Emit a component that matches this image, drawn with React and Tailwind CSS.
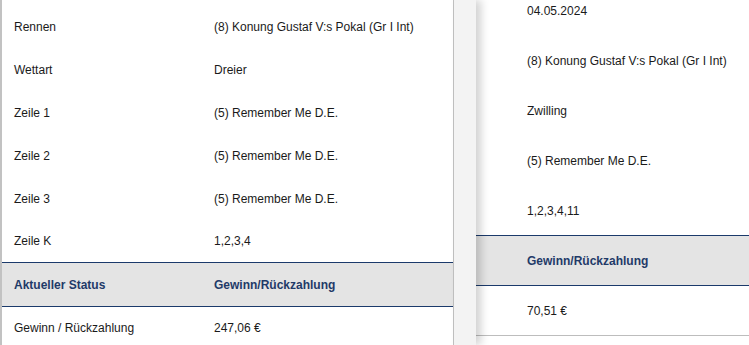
import React from 'react';

const LEFT_ROWS = [
  ['Rennen', '(8) Konung Gustaf V:s Pokal (Gr I Int)'],
  ['Wettart', 'Dreier'],
  ['Zeile 1', '(5) Remember Me D.E.'],
  ['Zeile 2', '(5) Remember Me D.E.'],
  ['Zeile 3', '(5) Remember Me D.E.'],
  ['Zeile K', '1,2,3,4'],
];

const RIGHT_ROWS = [
  '04.05.2024',
  '(8) Konung Gustaf V:s Pokal (Gr I Int)',
  'Zwilling',
  '(5) Remember Me D.E.',
  '1,2,3,4,11',
];

export default function App() {
  return (
    <div className="flex h-[345px] w-[749px] overflow-hidden bg-[#f3f3f3] font-['Liberation_Sans',Arial,sans-serif] text-[12px] text-[#1a1a1a]">
      {/* left slip */}
      <div className="flex w-[454px] flex-none flex-col border-l-2 border-r border-l-[#c2c2c2] border-r-[#c2c2c2] bg-white pt-[5px]">
        {LEFT_ROWS.map(([label, value], i) => (
          <div key={i} className={`flex shrink-0 items-center ${i === 5 ? 'h-[42px]' : 'h-[43px]'}`}>
            <span className="w-[212px] pl-3">{label}</span>
            <span>{value}</span>
          </div>
        ))}
        <div className="flex h-[45px] shrink-0 items-center border-y border-[#1b3a6b] bg-[#e4e4e4] font-bold text-[#1f3a68]">
          <span className="w-[212px] pl-3">Aktueller Status</span>
          <span>Gewinn/Rückzahlung</span>
        </div>
        <div className="flex h-[41px] shrink-0 items-center">
          <span className="w-[212px] pl-3">Gewinn / Rückzahlung</span>
          <span>247,06 €</span>
        </div>
      </div>

      {/* gap casting shadow on the right slip */}
      <div className="relative z-10 w-[22px] flex-none bg-[#f3f3f3] shadow-[5px_0_8px_rgba(0,0,0,0.18)]" />

      {/* right slip */}
      <div className="flex flex-1 flex-col bg-white">
        <div className="mt-[-14px] flex shrink-0 flex-col">
          {RIGHT_ROWS.map((value, i) => (
            <div key={i} className={`flex shrink-0 items-center pl-[51px] ${i === 4 ? 'h-[49px]' : 'h-[50px]'}`}>
              {value}
            </div>
          ))}
        </div>
        <div className="flex h-[51px] shrink-0 items-center border-y border-[#1b3a6b] bg-[#e4e4e4] pl-[51px] font-bold text-[#1f3a68]">
          Gewinn/Rückzahlung
        </div>
        <div className="flex h-[50px] shrink-0 items-center border-b border-[#bdbdbd] pl-[51px]">
          70,51 €
        </div>
      </div>
    </div>
  );
}
